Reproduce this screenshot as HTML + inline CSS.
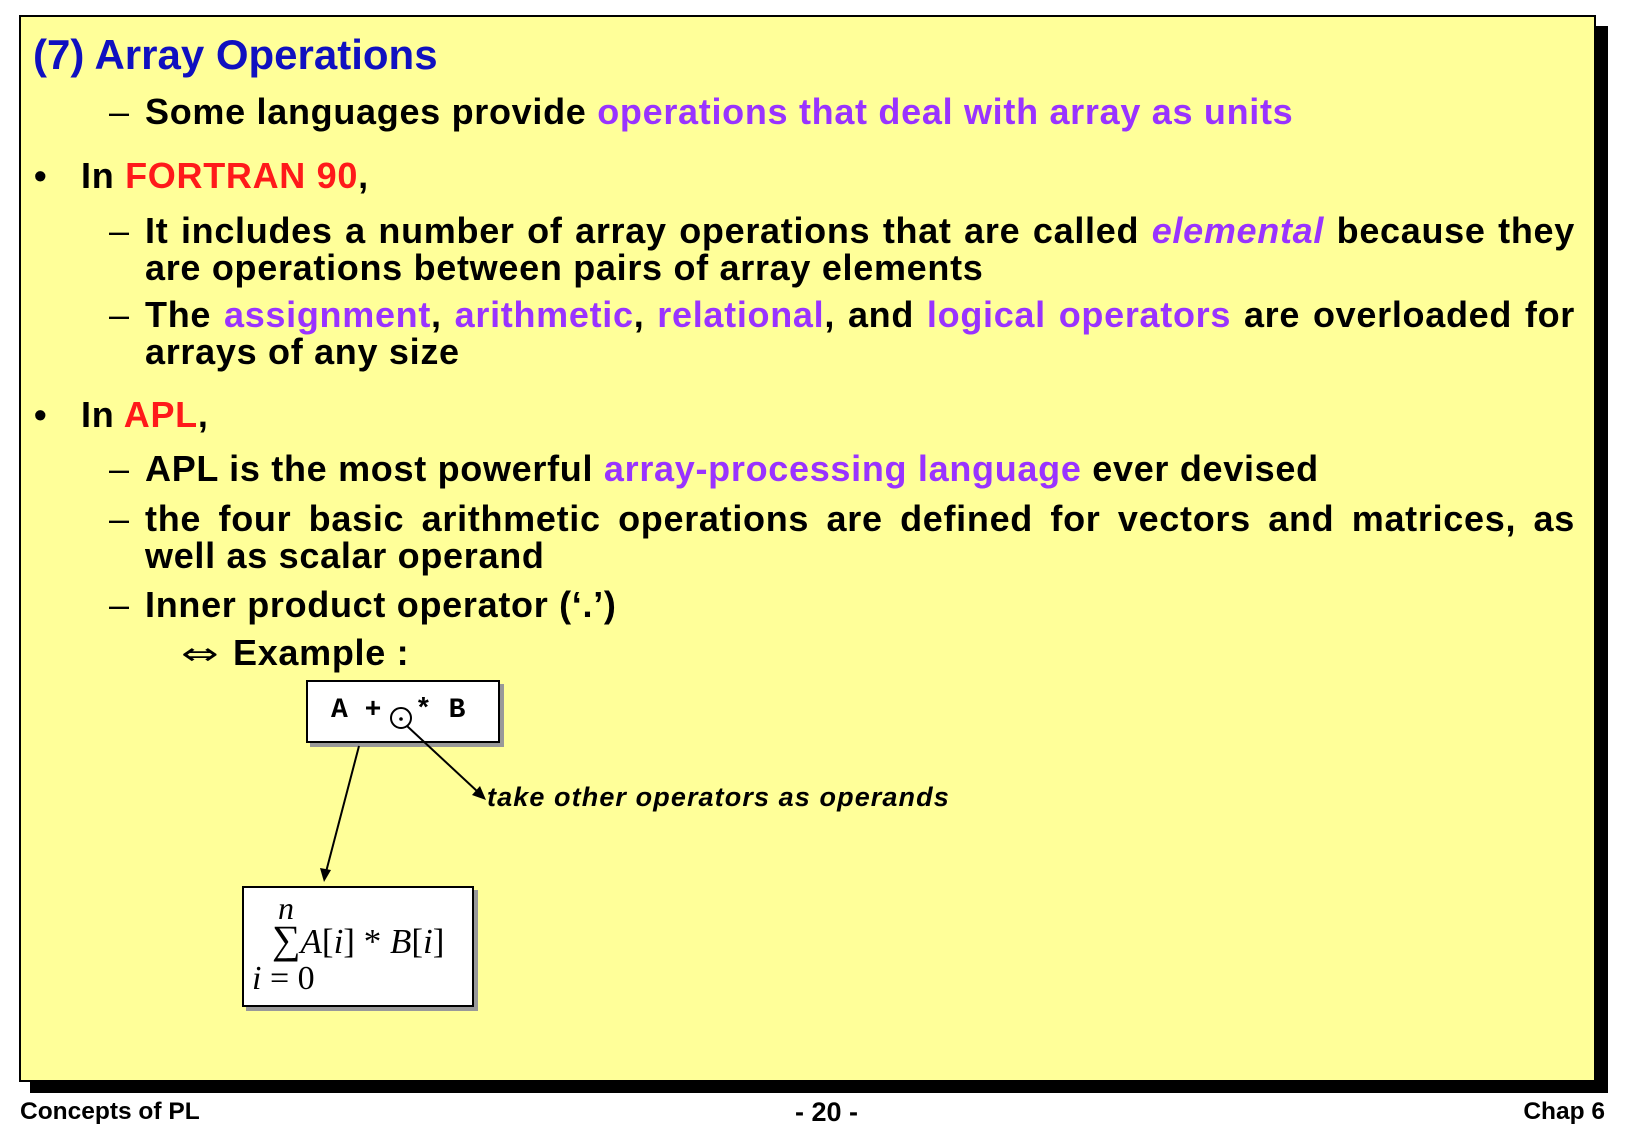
<!DOCTYPE html>
<html><head><meta charset="utf-8"><style>
body{margin:0;width:1625px;height:1125px;background:#fff;position:relative;overflow:hidden;font-family:"Liberation Sans",sans-serif;font-weight:bold;color:#000}
.a{position:absolute;white-space:nowrap}
.t{position:absolute;font-size:36px;line-height:37px;letter-spacing:0.7px}
.j{text-align:justify;text-align-last:left;white-space:normal;width:1430px;left:145px}
.p{color:#9933ff}.r{color:#ff1a1a}
.d{left:109px;font-weight:normal}.x{left:145px}
</style></head><body>
<div style="position:absolute;left:30px;top:26px;width:1578px;height:1067px;background:#000"></div>
<div style="position:absolute;left:19px;top:15px;width:1573px;height:1063px;background:#ffff99;border:2px solid #000"></div>
<div class="a" style="left:33px;top:31px;font-size:42px;line-height:48px;color:#1010c0">(7) Array Operations</div>
<div class="a t d" style="top:93px">–</div><div class="a t x" style="top:93px">Some languages provide <span class="p">operations that deal with array as units</span></div>
<div class="a t" style="left:34px;top:157px">•</div><div class="a t" style="left:81px;top:157px">In <span class="r">FORTRAN 90</span>,</div>
<div class="a t d" style="top:212px">–</div><div class="t j" style="top:212px">It includes a number of array operations that are called <i class="p">elemental</i> because they are operations between pairs of array elements</div>
<div class="a t d" style="top:296px">–</div><div class="t j" style="top:296px">The <span class="p">assignment</span>, <span class="p">arithmetic</span>, <span class="p">relational</span>, and <span class="p">logical operators</span> are overloaded for arrays of any size</div>
<div class="a t" style="left:34px;top:396px">•</div><div class="a t" style="left:81px;top:396px">In <span class="r">APL</span>,</div>
<div class="a t d" style="top:450px">–</div><div class="a t x" style="top:450px">APL is the most powerful <span class="p">array-processing language</span> ever devised</div>
<div class="a t d" style="top:500px">–</div><div class="t j" style="top:500px">the four basic arithmetic operations are defined for vectors and matrices, as well as scalar operand</div>
<div class="a t d" style="top:586px">–</div><div class="a t x" style="top:586px">Inner product operator (‘.’)</div>
<div class="a" style="left:181px;top:636px;font-weight:normal;font-family:'DejaVu Sans',sans-serif;font-size:30px;line-height:37px;transform:scaleX(1.5);transform-origin:left">⇔</div><div class="a t" style="left:233px;top:634px">Example :</div>
<div style="position:absolute;left:310px;top:684px;width:194px;height:63px;background:#999"></div>
<div style="position:absolute;left:306px;top:680px;width:190px;height:59px;background:#fff;border:2px solid #000"></div>
<div class="a" style="left:331px;top:697px;font-family:'Liberation Mono',monospace;font-size:28px;line-height:28px">A&nbsp;+&nbsp;&nbsp;* B</div>
<div style="position:absolute;left:246px;top:890px;width:232px;height:121px;background:#999"></div>
<div style="position:absolute;left:242px;top:886px;width:228px;height:117px;background:#fff;border:2px solid #000"></div>
<div class="a" style="font-family:'Liberation Serif',serif;font-weight:normal;font-style:italic;font-size:32px;left:278px;top:890px">n</div>
<div class="a" style="font-family:'Liberation Serif',serif;font-weight:normal;font-size:35px;left:272px;top:922px"><span style="font-size:40px;line-height:30px">∑</span><i>A</i>[<i>i</i>] * <i>B</i>[<i>i</i>]</div>
<div class="a" style="font-family:'Liberation Serif',serif;font-weight:normal;font-size:34px;left:252px;top:960px"><i>i</i> = 0</div>
<svg style="position:absolute;left:0;top:0" width="1625" height="1125">
<circle cx="401" cy="718" r="10" fill="none" stroke="#000" stroke-width="2"/><circle cx="401" cy="719" r="1.8"/>
<line x1="359" y1="746" x2="326" y2="872" stroke="#000" stroke-width="2"/><polygon points="324,882 320,868 331,870"/>
<line x1="407" y1="726" x2="478" y2="792" stroke="#000" stroke-width="2"/><polygon points="486,800 472,795 480,786"/>
</svg>
<div class="a" style="left:487px;top:782px;font-size:27px;line-height:30px;font-style:italic;letter-spacing:1.1px">take other operators as operands</div>
<div class="a" style="left:20px;top:1098px;font-size:24.5px">Concepts of PL</div>
<div class="a" style="left:795px;top:1097px;font-size:27px">- 20 -</div>
<div class="a" style="right:20px;top:1098px;font-size:24.5px">Chap 6</div>
</body></html>
